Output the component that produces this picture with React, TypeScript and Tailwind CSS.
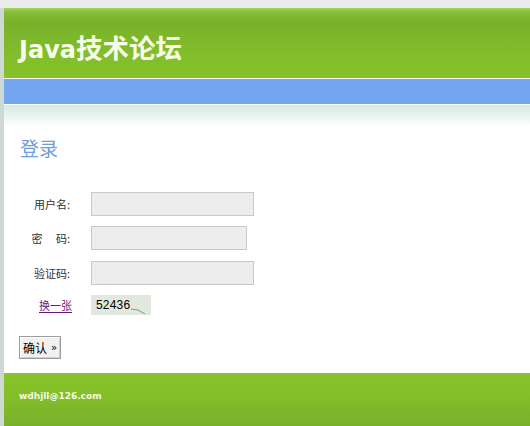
import React from "react";

export default function App() {
  const cjk = { fontFamily: '"Noto Sans CJK SC", "DejaVu Sans", sans-serif' };
  return (
    <div className="w-[530px] h-[426px] overflow-hidden bg-white flex flex-col" style={cjk}>
      <div className="h-[8px] bg-[#ececec] shrink-0" />
      <div className="flex flex-1 min-h-0">
        <div className="w-[4px] bg-[#cfd9d4] shrink-0" />
        <div className="flex-1 flex flex-col min-w-0">
          {/* header */}
          <div className="h-[70px] shrink-0 bg-[linear-gradient(to_bottom,#a6d35e_0px,#86bf36_4px,#78b12a_14px,#82bd2c_45px,#86c229_100%)] flex items-center pl-[15px] pt-[10px]">
            <h1
              className="text-[24px] font-bold leading-none text-[#f7fde8] whitespace-nowrap"
              style={{ fontFamily: '"DejaVu Sans", "Noto Sans CJK SC", sans-serif' }}
            >
              Java<span className="text-[26.5px]" style={cjk}>技术论坛</span>
            </h1>
          </div>
          <div className="h-[1px] bg-white shrink-0" />
          <div className="h-[25px] bg-[#74a6f0] shrink-0" />
          <div className="h-[1px] bg-white shrink-0" />
          {/* content */}
          <div className="h-[268px] shrink-0 bg-[linear-gradient(to_bottom,#d6eae6_0px,#e3f0ee_8px,#ffffff_22px,#ffffff_100%)] pl-[15px] pt-[31px]">
            <h2 className="text-[19px] leading-[24px] text-[#6f9dd8] pl-[1px]">登录</h2>
            <div className="mt-[32px] flex flex-col text-[11px] text-[#333]">
              <div className="flex items-center h-[24px]">
                <div className="w-[52px] text-right pr-[1px]">用户名:</div>
                <div className="ml-[20px] w-[163px] h-[24px] border border-[#c8c8c8] bg-[#ededed]" />
              </div>
              <div className="flex items-center h-[24px] mt-[10px]">
                <div className="w-[52px] text-right pr-[1px] whitespace-pre">密{"\u3000 "}码:</div>
                <div className="ml-[20px] w-[156px] h-[24px] border border-[#c8c8c8] bg-[#ededed]" />
              </div>
              <div className="flex items-center h-[24px] mt-[11px]">
                <div className="w-[52px] text-right pr-[1px]">验证码:</div>
                <div className="ml-[20px] w-[163px] h-[24px] border border-[#c8c8c8] bg-[#ededed]" />
              </div>
              <div className="flex items-center h-[20px] mt-[10px]">
                <div className="w-[53px] text-right">
                  <a className="text-[#6a1b7e] underline underline-offset-2">换一张</a>
                </div>
                <div className="ml-[19px] w-[60px] h-[20px] bg-[#e1e9de] relative flex items-center pl-[5px]">
                  <span
                    className="text-[12px] text-black tracking-[0.2px]"
                    style={{ fontFamily: '"Liberation Sans", Arial, sans-serif' }}
                  >
                    52436
                  </span>
                  <svg className="absolute left-0 top-0" width="60" height="20">
                    <path d="M40 14 L47 15 L54 19" stroke="#8a958a" strokeWidth="1" fill="none" />
                  </svg>
                </div>
              </div>
              <div className="mt-[21px]">
                <button className="h-[23px] px-[3px] border border-[#9c9c9c] bg-[#f1f1f1] shadow-[inset_1px_1px_0_#ffffff,inset_-1px_-1px_0_#cfcfcf] text-[12px] text-black leading-none flex items-center gap-[4px]">
                  <span>确认</span>
                  <span className="text-[10px]" style={{ fontFamily: '"DejaVu Sans", sans-serif' }}>»</span>
                </button>
              </div>
            </div>
          </div>
          {/* footer */}
          <div className="flex-1 bg-[linear-gradient(to_bottom,#8cc33c_0px,#86c229_3px,#84bf2a_40%,#78b12a_100%)] pl-[15px] pt-[17px]">
            <p
              className="text-[9px] font-bold text-[#f3fbe2]"
              style={{ fontFamily: '"DejaVu Sans", sans-serif' }}
            >
              wdhjll@126.com
            </p>
          </div>
        </div>
      </div>
    </div>
  );
}
